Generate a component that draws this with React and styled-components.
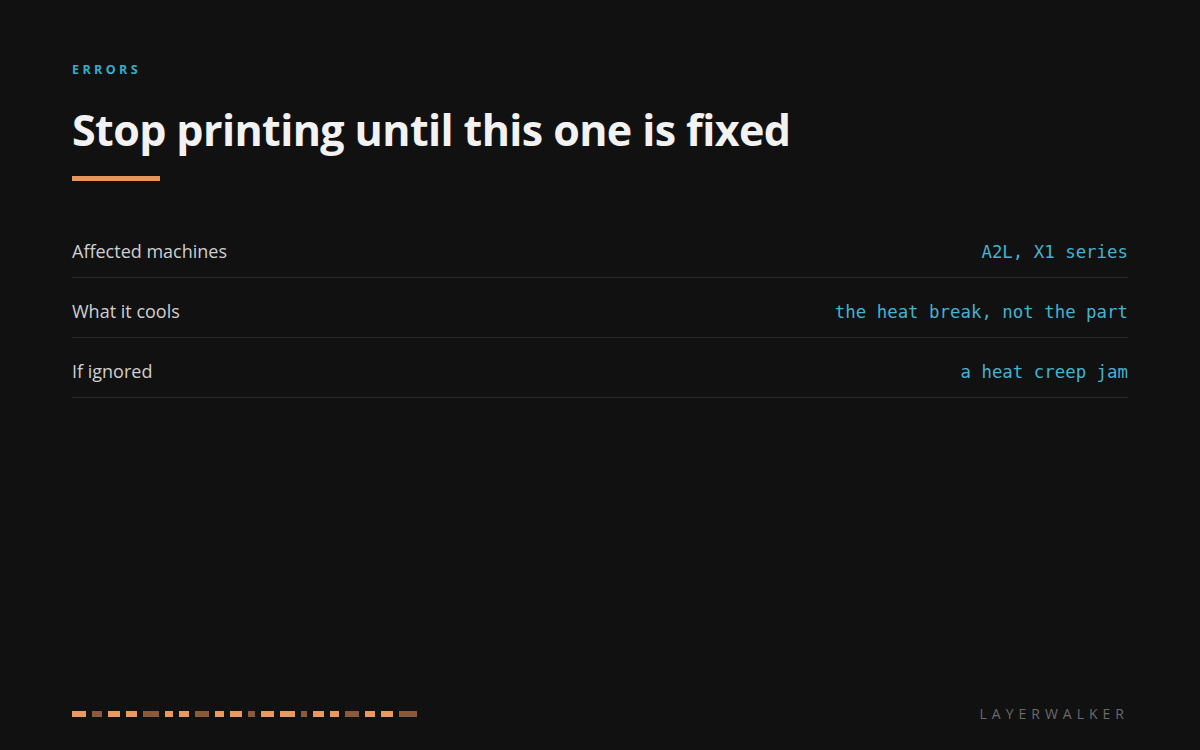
import React from "react";
import styled, { createGlobalStyle } from "styled-components";

const Global = createGlobalStyle`
  html, body { margin: 0; padding: 0; background: #111111; }
  * { box-sizing: border-box; }
`;

const Page = styled.div`
  width: 1200px;
  height: 750px;
  background: #111111;
  padding: 60px 72px 27px;
  display: flex;
  flex-direction: column;
  font-family: "Open Sans", "Noto Sans", sans-serif;
`;

const Eyebrow = styled.div`
  font-size: 12.5px;
  font-weight: 700;
  letter-spacing: 3.4px;
  color: #38acc9;
  line-height: 20px;
`;

const Title = styled.h1`
  margin: 22px 0 0;
  font-size: 43px;
  font-weight: 700;
  color: #f2f2f2;
  line-height: 56px;
  letter-spacing: -0.6px;
`;

const Rule = styled.div`
  width: 88px;
  height: 5px;
  background: #e8975c;
  margin-top: 18px;
`;

const Table = styled.div`
  margin-top: 37px;
  display: flex;
  flex-direction: column;
`;

const Row = styled.div`
  display: flex;
  justify-content: space-between;
  align-items: center;
  height: 60px;
  padding-top: 6px;
  border-bottom: 1px solid #2a2a2a;
`;

const Label = styled.span`
  font-size: 18px;
  color: #cfcfcf;
`;

const Value = styled.span`
  font-family: "DejaVu Sans Mono", "Liberation Mono", monospace;
  font-size: 17.4px;
  color: #45b2cf;
  padding-top: 2px;
`;

const Footer = styled.div`
  margin-top: auto;
  display: flex;
  justify-content: space-between;
  align-items: center;
`;

const Dashes = styled.div`
  display: flex;
  gap: 6px;
  align-items: center;
`;

const Dash = styled.span`
  display: block;
  height: 6px;
  background: ${(p) => (p.$dark ? "#8a5b3a" : "#ea9a60")};
`;

const Brand = styled.div`
  font-size: 14px;
  letter-spacing: 5px;
  color: #6a6a6a;
  margin-right: -1px;
`;

const rows = [
  ["Affected machines", "A2L, X1 series"],
  ["What it cools", "the heat break, not the part"],
  ["If ignored", "a heat creep jam"],
];

const dashes = [
  [14, 0], [10, 1], [12, 0], [11, 0], [16, 1], [8, 0], [10, 0], [14, 1],
  [9, 0], [12, 0], [7, 1], [13, 0], [15, 0], [6, 1], [11, 0], [9, 0],
  [14, 1], [10, 0], [12, 0], [18, 1],
];

export default function App() {
  return (
    <>
      <Global />
      <Page>
        <Eyebrow>ERRORS</Eyebrow>
        <Title>Stop printing until this one is fixed</Title>
        <Rule />
        <Table>
          {rows.map(([l, v]) => (
            <Row key={l}>
              <Label>{l}</Label>
              <Value>{v}</Value>
            </Row>
          ))}
        </Table>
        <Footer>
          <Dashes>
            {dashes.map(([w, d], i) => (
              <Dash key={i} $dark={!!d} style={{ width: w }} />
            ))}
          </Dashes>
          <Brand>LAYERWALKER</Brand>
        </Footer>
      </Page>
    </>
  );
}
